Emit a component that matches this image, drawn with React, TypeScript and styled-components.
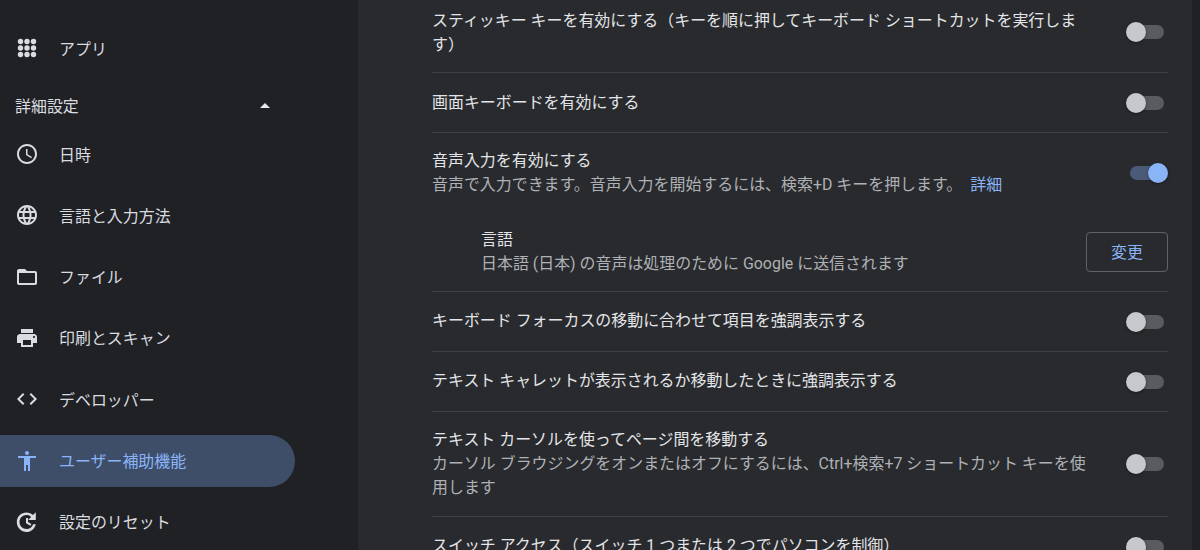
import React from 'react';
import styled, { createGlobalStyle } from 'styled-components';

const Global = createGlobalStyle`
  html, body { margin: 0; padding: 0; background: #202124; }
  body { width: 1200px; height: 550px; overflow: hidden; font-family: Roboto, "Noto Sans CJK JP", sans-serif; }
`;

const Page = styled.div`
  display: flex; width: 1200px; height: 550px; overflow: hidden; background: #202124;
`;
const Sidebar = styled.nav`
  width: 358px; flex: none; padding-top: 22px; box-sizing: border-box;
`;
const NavItem = styled.div<{ $active?: boolean }>`
  display: flex; align-items: center; width: 295px; height: 52px; margin-bottom: 9.33px;
  padding-left: 15px; box-sizing: border-box; gap: 20px; font-size: 15.94px;
  border-radius: 0 26px 26px 0;
  color: ${p => (p.$active ? '#8ab4f8' : '#dadce0')};
  background: ${p => (p.$active ? '#3f4e68' : 'transparent')};
  svg { width: 24px; height: 24px; fill: currentColor; flex: none; }
`;
const SectionHead = styled.div`
  display: flex; align-items: center; justify-content: space-between; width: 295px;
  padding: 0 25px 0 15px; box-sizing: border-box; height: 24px; margin: 19px 0 11px; color: #dadce0; font-size: 15.94px;
`;
const Caret = styled.span`
  width: 0; height: 0; border-left: 5px solid transparent; border-right: 5px solid transparent;
  border-bottom: 5px solid #e8eaed;
`;
const Card = styled.main`
  width: 834px; flex: none; background: #292a2d; padding: 0 24px 0 74px; box-sizing: border-box; overflow: hidden;
`;
const List = styled.div`margin-top: -8px;`;
const Row = styled.div<{ $h: number; $noBorder?: boolean; $indent?: boolean }>`
  display: flex; align-items: center; justify-content: space-between; height: ${p => p.$h}px; box-sizing: border-box;
  border-bottom: ${p => (p.$noBorder ? 'none' : '1px solid #3f4043')};
  padding-left: ${p => (p.$indent ? '49px' : '0')};
`;
const TextCol = styled.div<{ $nudge?: number }>`
  flex: 1; min-width: 0; max-width: 655px;
  padding-bottom: ${p => (p.$nudge === -1 ? '2px' : '0')};
  padding-top: ${p => (p.$nudge === 1 ? '2px' : '0')};
`;
const Title = styled.div`font-size: 15.94px; line-height: 24px; color: #e3e5e8;`;
const Sub = styled.div`font-size: 15.94px; line-height: 24px; color: #aeb1b5;`;
const Link = styled.span`color: #8ab4f8; margin-left: 8px;`;
const Toggle = styled.div<{ $on?: boolean }>`
  position: relative; width: 34px; height: 14px; margin-right: 4px; border-radius: 7px; flex: none;
  background: ${p => (p.$on ? '#4a5a78' : '#5a5b5e')};
  &::after {
    content: ''; position: absolute; top: -3px; width: 20px; height: 20px; border-radius: 50%;
    left: ${p => (p.$on ? '18px' : '-4px')};
    background: ${p => (p.$on ? '#8ab4f8' : '#c6c8cb')};
    box-shadow: 0 1px 3px rgba(0,0,0,.4);
  }
`;
const Button = styled.button`
  width: 82px; height: 40px; box-sizing: border-box; background: transparent; border: 1px solid #5f6368; border-radius: 4px;
  color: #8ab4f8; font: 15.94px Roboto, "Noto Sans CJK JP", sans-serif; flex: none;
`;

const I = {
  apps: <svg viewBox="0 0 24 24">{[5.5,12,18.5].flatMap(y=>[5.5,12,18.5].map(x=><circle key={x+'-'+y} cx={x} cy={y} r="2.7"/>))}</svg>,
  clock: <svg viewBox="0 0 24 24"><path d="M11.99 2C6.47 2 2 6.48 2 12s4.47 10 9.99 10C17.52 22 22 17.52 22 12S17.52 2 11.99 2zM12 20c-4.42 0-8-3.58-8-8s3.58-8 8-8 8 3.58 8 8-3.58 8-8 8zm.5-13H11v6l5.25 3.15.75-1.23-4.5-2.67z"/></svg>,
  globe: <svg viewBox="0 0 24 24"><path d="M11.99 2C6.47 2 2 6.48 2 12s4.47 10 9.99 10C17.52 22 22 17.52 22 12S17.52 2 11.99 2zm6.93 6h-2.95c-.32-1.25-.78-2.45-1.38-3.56 1.84.63 3.37 1.91 4.33 3.56zM12 4.04c.83 1.2 1.48 2.53 1.91 3.96h-3.82c.43-1.43 1.08-2.76 1.91-3.96zM4.26 14C4.1 13.36 4 12.69 4 12s.1-1.36.26-2h3.38c-.08.66-.14 1.32-.14 2s.06 1.34.14 2H4.26zm.82 2h2.95c.32 1.25.78 2.45 1.38 3.56-1.84-.63-3.37-1.9-4.33-3.56zm2.95-8H5.08c.96-1.66 2.49-2.93 4.33-3.56C8.81 5.55 8.35 6.75 8.03 8zM12 19.96c-.83-1.2-1.48-2.53-1.91-3.96h3.82c-.43 1.43-1.08 2.76-1.91 3.96zM14.34 14H9.66c-.09-.66-.16-1.32-.16-2s.07-1.35.16-2h4.68c.09.65.16 1.32.16 2s-.07 1.34-.16 2zm.25 5.56c.6-1.11 1.06-2.31 1.38-3.56h2.95c-.96 1.65-2.49 2.93-4.33 3.56zM16.36 14c.08-.66.14-1.32.14-2s-.06-1.34-.14-2h3.38c.16.64.26 1.31.26 2s-.1 1.36-.26 2h-3.38z"/></svg>,
  folder: <svg viewBox="0 0 24 24"><path d="M20 6h-8l-2-2H4c-1.1 0-1.99.9-1.99 2L2 18c0 1.1.9 2 2 2h16c1.1 0 2-.9 2-2V8c0-1.1-.9-2-2-2zm0 12H4V8h16v10z"/></svg>,
  print: <svg viewBox="0 0 24 24"><path d="M19 8H5c-1.66 0-3 1.34-3 3v6h4v4h12v-4h4v-6c0-1.66-1.34-3-3-3zm-3 11H8v-5h8v5zm3-7c-.55 0-1-.45-1-1s.45-1 1-1 1 .45 1 1-.45 1-1 1zm-1-9H6v4h12V3z"/></svg>,
  code: <svg viewBox="0 0 24 24"><path d="M9.4 16.6L4.8 12l4.6-4.6L8 6l-6 6 6 6 1.4-1.4zm5.2 0l4.6-4.6-4.6-4.6L16 6l6 6-6 6-1.4-1.4z"/></svg>,
  a11y: <svg viewBox="0 0 24 24"><path d="M12 2c1.1 0 2 .9 2 2s-.9 2-2 2-2-.9-2-2 .9-2 2-2zm9 7h-6v13h-2v-6h-2v6H9V9H3V7h18v2z"/></svg>,
  reset: <svg viewBox="0 0 24 24"><path d="M11.5 2.500c2.500 0 4.800 1 6.500 2.600L20.800 2.300V10h-7.700l3-3C14.900 5.600 13.300 5 11.500 5c-3.900 0-7 3.100-7 7s3.100 7 7 7c3.100 0 5.700-2 6.600-4.800h2.700C19.800 18.700 16 22 11.500 22c-5.400 0-9.700-4.500-9.700-10S6.100 2.500 11.500 2.500zM11 8h2v4.100l3.400 2-1 1.700L11 13.200V8z"/></svg>,
};

export default function App() {
  return (
    <Page>
      <Global />
      <Sidebar>
        <NavItem>{I.apps}アプリ</NavItem>
        <SectionHead>詳細設定<Caret /></SectionHead>
        <NavItem>{I.clock}日時</NavItem>
        <NavItem>{I.globe}言語と入力方法</NavItem>
        <NavItem>{I.folder}ファイル</NavItem>
        <NavItem>{I.print}印刷とスキャン</NavItem>
        <NavItem>{I.code}デベロッパー</NavItem>
        <NavItem $active>{I.a11y}ユーザー補助機能</NavItem>
        <NavItem>{I.reset}設定のリセット</NavItem>
      </Sidebar>
      <Card>
        <List>
          <Row $h={81}><TextCol $nudge={1}><Title>スティッキー キーを有効にする（キーを順に押してキーボード ショートカットを実行します）</Title></TextCol><Toggle /></Row>
          <Row $h={60}><TextCol><Title>画面キーボードを有効にする</Title></TextCol><Toggle /></Row>
          <Row $h={79} $noBorder><TextCol><Title>音声入力を有効にする</Title><Sub>音声で入力できます。音声入力を開始するには、検索+D キーを押します。<Link>詳細</Link></Sub></TextCol><Toggle $on /></Row>
          <Row $h={80} $indent><TextCol><Title>言語</Title><Sub>日本語 (日本) の音声は処理のために Google に送信されます</Sub></TextCol><Button>変更</Button></Row>
          <Row $h={60}><TextCol $nudge={-1}><Title>キーボード フォーカスの移動に合わせて項目を強調表示する</Title></TextCol><Toggle /></Row>
          <Row $h={60}><TextCol $nudge={-1}><Title>テキスト キャレットが表示されるか移動したときに強調表示する</Title></TextCol><Toggle /></Row>
          <Row $h={105}><TextCol><Title>テキスト カーソルを使ってページ間を移動する</Title><Sub>カーソル ブラウジングをオンまたはオフにするには、Ctrl+検索+7 ショートカット キーを使用します</Sub></TextCol><Toggle /></Row>
          <Row $h={60} $noBorder><TextCol $nudge={-1}><Title>スイッチ アクセス（スイッチ 1 つまたは 2 つでパソコンを制御）</Title></TextCol><Toggle /></Row>
        </List>
      </Card>
    </Page>
  );
}
